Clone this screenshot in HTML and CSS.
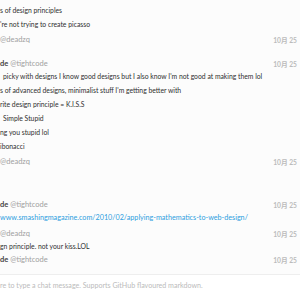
FILE: index.html
```html
<!DOCTYPE html>
<html lang="en">
<head>
  <meta charset="UTF-8" />
  <meta name="viewport" content="width=device-width, initial-scale=1.0"/>
  <title>Chat</title>
  <link rel="stylesheet" href="styles.css">
</head>
<body>

  <!-- CHAT MESSAGES -->
  <div class="chat">
    <div class="msg cont">
      <p>s of design principles</p>
      <p>'re not trying to create picasso</p>
    </div>

    <div class="msg">
      <div class="head">
        <span class="at">@deadzq</span>
        <span class="time">10月 25</span>
      </div>
      <div class="body empty"></div>
    </div>

    <div class="msg">
      <div class="head">
        <span><span class="name">de</span> <span class="at">@tightcode</span></span>
        <span class="time">10月 25</span>
      </div>
      <div class="body">
        <p class="indent">picky with designs I know good designs but I also know I'm not good at making them lol</p>
        <p>s of advanced designs, minimalist stuff I'm getting better with</p>
        <p>rite design principle = K.I.S.S</p>
        <p class="indent">Simple Stupid</p>
        <p>ng you stupid lol</p>
        <p>ibonacci</p>
      </div>
    </div>

    <div class="msg">
      <div class="head">
        <span class="at">@deadzq</span>
        <span class="time">10月 25</span>
      </div>
      <div class="body empty tall"></div>
    </div>

    <div class="msg">
      <div class="head">
        <span><span class="name">de</span> <span class="at">@tightcode</span></span>
        <span class="time">10月 25</span>
      </div>
      <div class="body">
        <p><a href="#">www.smashingmagazine.com/2010/02/applying-mathematics-to-web-design/</a></p>
      </div>
    </div>

    <div class="msg">
      <div class="head">
        <span class="at">@deadzq</span>
        <span class="time">10月 25</span>
      </div>
      <div class="body">
        <p>gn principle. not your kiss.LOL</p>
      </div>
    </div>

    <div class="msg last">
      <div class="head">
        <span><span class="name">de</span> <span class="at">@tightcode</span></span>
        <span class="time">10月 25</span>
      </div>
    </div>
  </div>

  <!-- CHAT INPUT -->
  <div class="chat-input">re to type a chat message. Supports GitHub flavoured markdown.</div>

</body>
</html>
```

FILE: styles.css
```css
body {
  margin: 0;
  width: 300px;
  height: 300px;
  overflow: hidden;
  font-family: Lato, "Noto Sans CJK SC", sans-serif;
  font-size: 6.8px;
  color: #2f2f2f;
  background-color: #fff;
}

/* MESSAGES */
.chat {
  height: 274px;
  background-color: #fcfcfc;
  overflow: hidden;
}

.msg {
  padding-top: 3px;
}

.msg.last {
  padding-top: 1px;
}

.msg p {
  margin: 0;
  line-height: 14px;
  white-space: nowrap;
}

.msg p.indent {
  padding-left: 3px;
}

.head {
  display: flex;
  justify-content: space-between;
  align-items: center;
  height: 11px;
  padding-right: 3px;
  font-size: 7.5px;
}

.name {
  font-weight: bold;
  color: #444;
}

.at {
  color: #a0a0a0;
}

.time {
  color: #bbb;
  font-weight: bold;
  font-size: 6.7px;
}

.body.empty {
  height: 10px;
}

.body.empty.tall {
  height: 29px;
}

.msg a {
  color: #2d9ee0;
  font-size: 7.2px;
  text-decoration: none;
}

/* INPUT */
.chat-input {
  height: 25px;
  border-top: 1px solid #eee;
  line-height: 22px;
  font-size: 7.1px;
  color: #bbb;
  white-space: nowrap;
}
```
